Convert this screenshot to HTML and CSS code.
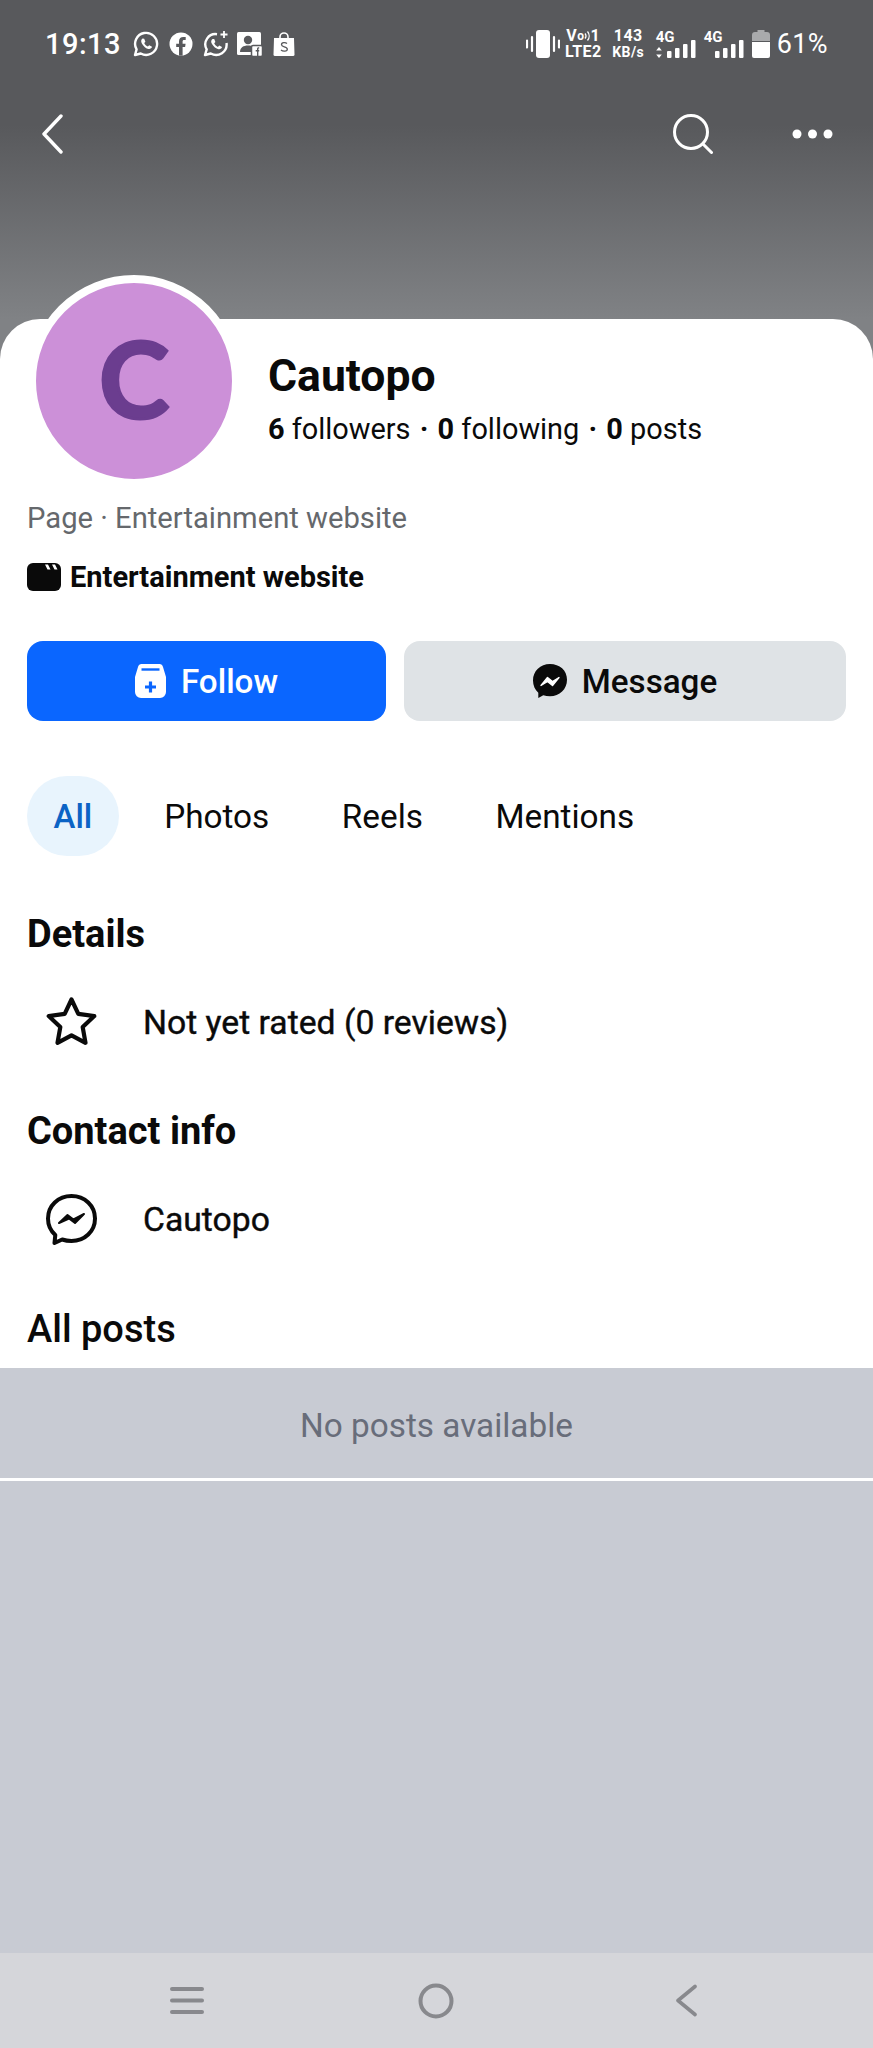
FILE: index.html
```html
<!DOCTYPE html>
<html lang="en">
<head>
    <meta charset="UTF-8">
    <meta name="viewport" content="width=device-width, initial-scale=1.0">
    <title>Cautopo</title>
    <link rel="stylesheet" href="styles.css">
</head>
<body>
    <header class="cover">
        <div class="status-bar">
            <div class="status-left">
                <span class="clock">19:13</span>
                <svg class="st-icon" width="26" height="26" viewBox="0 0 26 26"><path d="M2 24l1.600-5.600A11 11 0 1 1 7.800 22.500z" fill="none" stroke="#fff" stroke-width="2.400" stroke-linejoin="round"/><path d="M9.500 7.500c-1.500 1-1.800 3-.5 5.200 1.500 2.600 4 4.800 6.500 5.300 1.800.3 3.200-.7 3.500-2.200l-2.800-1.500-1.300 1.300c-1.500-.6-3-2-3.700-3.600l1.200-1.300-1.200-3z" fill="#fff"/></svg>
                <svg class="st-icon" width="24" height="24" viewBox="0 0 24 24"><circle cx="12" cy="12" r="11.500" fill="#fff"/><path d="M10 23.500V15H7.200v-3.300H10V9.300c0-2.900 1.700-4.400 4.300-4.400.9 0 1.700.1 2.400.2v2.900h-1.500c-1.300 0-1.600.7-1.600 1.600v2.100h3l-.5 3.300h-2.500v8.500z" fill="#58595c"/></svg>
                <svg class="st-icon" width="26" height="26" viewBox="0 0 26 26"><path d="M14 3.200A10.200 10.200 0 0 0 3.700 18.400L2 24l5.800-1.500A10.500 10.500 0 0 0 23.500 12" fill="none" stroke="#fff" stroke-width="2.400" stroke-linejoin="round"/><path d="M9.500 8c-1.500 1-1.800 3-.5 5 1.500 2.600 4 4.800 6.500 5.300 1.800.3 3.200-.7 3.500-2.200l-2.800-1.500-1.300 1.300c-1.500-.6-3-2-3.700-3.600l1.200-1.300-1.200-3z" fill="#fff"/><path d="M21 0v7M17.500 3.500h7" stroke="#fff" stroke-width="1.800"/></svg>
                <svg class="st-icon st-contact" width="26" height="25" viewBox="0 0 26 25"><rect x="0" y="0" width="24" height="23" rx="1.500" fill="#fff"/><circle cx="11" cy="8" r="4.200" fill="#58595c"/><path d="M3 20c0-4.500 3.500-6.500 8-6.500 2 0 3.500.4 4.800 1V20z" fill="#58595c"/><rect x="14.500" y="13.500" width="11" height="11" rx="1.500" fill="#fff" stroke="#58595c" stroke-width="1.500"/><path d="M20 24v-4.500h-1.300v-1.600H20v-1c0-1.300.8-1.900 2.200-1.700v1.300c-.6 0-.8.100-.8.500v.9h.8v1.600h-.8V24z" fill="#58595c"/></svg>
                <svg class="st-icon" width="22" height="24" viewBox="0 0 22 24"><path d="M1 6h20l.5 16.500a1.500 1.500 0 0 1-1.500 1.500H2a1.500 1.500 0 0 1-1.500-1.500z" fill="#fff"/><path d="M7 6.500V5a4 4 0 0 1 8 0v1.500" fill="none" stroke="#fff" stroke-width="1.600"/><path d="M14 11.500c-1.500-1.200-5.500-1.300-5.500 1.200 0 2.700 5.800 1.500 5.800 4.500 0 2.500-4.500 2.500-6.300.9" fill="none" stroke="#58595c" stroke-width="1.300"/></svg>
            </div>
            <div class="status-right">
                <svg class="st-icon" width="34" height="28" viewBox="0 0 34 28"><rect x="10" y="0" width="14" height="28" rx="3" fill="#fff"/><path d="M1 10.500v7M6 7v14M28 7v14M33 10.500v7" stroke="#fff" stroke-width="2.200" stroke-linecap="round"/></svg>
                <div class="net-text net-volte">
                    <span class="volte-top">V<small>o</small><svg width="6" height="12" viewBox="0 0 6 12"><path d="M1 3.500a4 4 0 0 1 0 5M3.500 1.500a7 7 0 0 1 0 9" fill="none" stroke="#fff" stroke-width="1.300"/></svg>1</span>
                    <span>LTE2</span>
                </div>
                <div class="net-text net-speed"><span>143</span><span class="net-small">KB/s</span></div>
                <div class="sim">
                    <span class="sim-label">4G</span>
                    <svg width="41" height="18" viewBox="0 0 41 18"><path d="M3 7l2.800 3.500H.2zM3 18l2.800-3.500H.2z" fill="#fff"/><rect x="11" y="11" width="4.500" height="7" rx="1" fill="#fff"/><rect x="19" y="8" width="4.500" height="10" rx="1" fill="#fff"/><rect x="27" y="4" width="4.500" height="14" rx="1" fill="#fff"/><rect x="35" y="0" width="4.500" height="18" rx="1" fill="#fff"/></svg>
                </div>
                <div class="sim sim-second">
                    <span class="sim-label">4G</span>
                    <svg width="41" height="18" viewBox="0 0 41 18"><rect x="11" y="11" width="4.500" height="7" rx="1" fill="#fff"/><rect x="19" y="8" width="4.500" height="10" rx="1" fill="#fff"/><rect x="27" y="4" width="4.500" height="14" rx="1" fill="#fff"/><rect x="35" y="0" width="4.500" height="18" rx="1" fill="#fff"/></svg>
                </div>
                <svg class="st-icon" width="18" height="28" viewBox="0 0 18 28"><path d="M0 11V5a3 3 0 0 1 3-3h2.500V0h7v2H15a3 3 0 0 1 3 3v6z" fill="#a9aaac"/><path d="M0 12h18v14a2 2 0 0 1-2 2H2a2 2 0 0 1-2-2z" fill="#fff"/></svg>
                <span class="battery-text">61%</span>
            </div>
        </div>
        <nav class="top-nav">
            <svg width="22" height="40" viewBox="0 0 22 40"><path d="M20 2L3 20l17 18" fill="none" stroke="#fff" stroke-width="3.400" stroke-linecap="round" stroke-linejoin="round"/></svg>
            <div class="top-actions">
                <svg width="40" height="40" viewBox="0 0 40 40"><circle cx="18" cy="18" r="16.500" fill="none" stroke="#fff" stroke-width="3"/><path d="M30 30l8.500 8.500" stroke="#fff" stroke-width="3" stroke-linecap="round"/></svg>
                <svg width="41" height="10" viewBox="0 0 41 10"><circle cx="5" cy="5" r="4.500" fill="#fff"/><circle cx="20.500" cy="5" r="4.500" fill="#fff"/><circle cx="36" cy="5" r="4.500" fill="#fff"/></svg>
            </div>
        </nav>
    </header>

    <main class="sheet">
        <div class="profile">
            <div class="avatar"><span>C</span></div>
            <div class="profile-text">
                <h1 class="name">Cautopo</h1>
                <p class="stats"><b>6</b> followers <i>·</i> <b>0</b> following <i>·</i> <b>0</b> posts</p>
            </div>
        </div>
        <p class="category">Page · Entertainment website</p>
        <div class="category-bold">
            <svg width="34" height="28" viewBox="0 0 34 28"><path d="M6 0h22a6 6 0 0 1 6 6v16a6 6 0 0 1-6 6H6a6 6 0 0 1-6-6V6a6 6 0 0 1 6-6z" fill="#0a0a0a"/><path d="M18 1.500l2.500 5h3l-2.500-5zM25 1.500l2.500 5h3l-2.500-5z" fill="#fff"/></svg>
            <span>Entertainment website</span>
        </div>

        <div class="buttons">
            <button class="btn btn-follow">
                <svg width="31" height="34" viewBox="0 0 31 34"><path d="M7 0h17a4 4 0 0 1 4 3l3 10v15a6 6 0 0 1-6 6H6a6 6 0 0 1-6-6V13l3-10a4 4 0 0 1 4-3z" fill="#fff"/><path d="M6.500 5.500h18" stroke="#0a66ff" stroke-width="2.400"/><path d="M15.500 17.500v11M10 23h11" stroke="#0a66ff" stroke-width="3.200"/></svg>
                Follow
            </button>
            <button class="btn btn-message">
                <svg width="34" height="34" viewBox="0 0 34 34"><path d="M17 0C7.400 0 0 7 0 16.500c0 5 2 9.300 5.300 12.300V34l5-2.700c2.100.6 4.300 1 6.700 1 9.600 0 17-7 17-16.500S26.600 0 17 0z" fill="#0a0a0a"/><path d="M8 21.500l6.500-8 5 4 6.500-4-6.500 8-5-4z" fill="#fff" stroke="#fff" stroke-width="1.400" stroke-linejoin="round"/></svg>
                Message
            </button>
        </div>

        <div class="tabs">
            <a class="tab tab-active">All</a>
            <a class="tab">Photos</a>
            <a class="tab">Reels</a>
            <a class="tab">Mentions</a>
        </div>

        <h2 class="section-title title-details">Details</h2>
        <div class="info-row row-rating">
            <svg width="51" height="51" viewBox="0 0 51 51"><path d="M25.500 2.500l6.800 14.300 16 2.300-11.600 11 2.800 15.700-14-7.500-14 7.500 2.800-15.700-11.600-11 16-2.300z" fill="none" stroke="#0a0a0a" stroke-width="4.200" stroke-linejoin="round"/></svg>
            <span>Not yet rated (0 reviews)</span>
        </div>

        <h2 class="section-title title-contact">Contact info</h2>
        <div class="info-row row-contact">
            <svg width="51" height="51" viewBox="0 0 51 51"><path d="M25.500 2C12.200 2 2 11.700 2 24.500c0 6.700 2.800 12.500 7.300 16.500l-.8 8 7.700-3.500c2.900 1 6 1.500 9.300 1.500 13.300 0 23.500-9.700 23.500-22.500S38.800 2 25.500 2z" fill="none" stroke="#0a0a0a" stroke-width="4" stroke-linejoin="round"/><path d="M13 29l8.500-8 6 4.500L38 20l-9 9-6-4.500z" fill="#0a0a0a" stroke="#0a0a0a" stroke-width="2" stroke-linejoin="round"/></svg>
            <span>Cautopo</span>
        </div>

        <h2 class="section-title title-posts">All posts</h2>
    </main>

    <section class="posts">
        <div class="no-posts">No posts available</div>
        <div class="posts-fill"></div>
    </section>

    <footer class="nav-bar">
        <svg width="34" height="29" viewBox="0 0 34 29"><path d="M2 3h30M2 14.500h30M2 26h30" stroke="#88898d" stroke-width="4" stroke-linecap="round"/></svg>
        <svg width="36" height="36" viewBox="0 0 36 36"><circle cx="18" cy="18" r="15.500" fill="none" stroke="#88898d" stroke-width="4"/></svg>
        <svg width="24" height="33" viewBox="0 0 24 33"><path d="M21 2.500L4 16.500l17 14" fill="none" stroke="#88898d" stroke-width="3.600" stroke-linecap="round" stroke-linejoin="round"/></svg>
    </footer>
</body>
</html>
```

FILE: styles.css
```css
* {
    box-sizing: border-box;
}

body {
    font-family: Roboto, 'Liberation Sans', sans-serif;
    margin: 0;
    height: 2048px;
    display: flex;
    flex-direction: column;
    color: #0a0a0a;
    background: #fff;
}

/* top area */
.cover {
    height: 359px;
    padding-top: 30px;
    background: linear-gradient(#58595c 0, #58595c 125px, #808285 319px);
    color: #fff;
}

.status-bar {
    height: 28px;
    padding: 0 45px;
    display: flex;
    justify-content: space-between;
    align-items: center;
}

.status-left,
.status-right {
    display: flex;
    align-items: center;
}

.status-left {
    gap: 10px;
}

.status-right {
    gap: 7px;
}

.st-icon {
    display: block;
}

.st-contact {
    margin-left: -2px;
}

.clock {
    font-size: 29px;
    font-weight: 500;
    letter-spacing: 0.5px;
    margin-right: 2px;
}

.net-text {
    display: flex;
    flex-direction: column;
    align-items: center;
    font-size: 16px;
    font-weight: 700;
    line-height: 16px;
    width: 33px;
    letter-spacing: 0.4px;
}

.volte-top {
    display: flex;
    align-items: center;
}

.volte-top small {
    font-size: 12px;
}

.net-speed {
    margin-left: 6px;
    width: 31px;
}

.net-small {
    font-size: 14px;
}

.sim {
    width: 41px;
    height: 28px;
    position: relative;
    margin-left: 5px;
}

.sim-second {
    margin-left: 0;
}

.sim svg {
    position: absolute;
    left: 0;
    bottom: 0;
}

.sim-label {
    position: absolute;
    left: 0;
    top: 0;
    font-size: 15px;
    font-weight: 700;
    line-height: 14px;
}

.battery-text {
    font-size: 27px;
    line-height: 28px;
    letter-spacing: 0.4px;
}

.top-nav {
    margin-top: 56px;
    padding: 0 40px 0 41px;
    display: flex;
    justify-content: space-between;
    align-items: center;
}

.top-actions {
    display: flex;
    align-items: center;
    gap: 79px;
}

/* white sheet */
.sheet {
    position: relative;
    margin-top: -40px;
    padding: 0 27px 17px;
    background: #fff;
    border-radius: 40px 40px 0 0;
}

.profile {
    display: flex;
    align-items: flex-start;
    gap: 28px;
}

.avatar {
    width: 212px;
    height: 212px;
    margin: -44px 0 0 1px;
    padding-bottom: 8px;
    border: 8px solid #fff;
    border-radius: 50%;
    background: #cc90d8;
    color: #6b3d8f;
    font-family: Lato, sans-serif;
    font-size: 106px;
    font-weight: 700;
    -webkit-text-stroke: 3px #6b3d8f;
    display: flex;
    align-items: center;
    justify-content: center;
}

.profile-text {
    margin-top: 33px;
}

.name {
    margin: 0;
    font-size: 44.500px;
    font-weight: 700;
    line-height: 48px;
}

.stats {
    margin: 11px 0 0;
    font-size: 28.900px;
    line-height: 36px;
}

.stats i {
    font-style: normal;
    font-weight: 700;
    margin: 0 2px;
}

.category {
    margin: 13px 0 0;
    font-size: 29.200px;
    line-height: 36px;
    color: #65686c;
}

.category-bold {
    margin-top: 23px;
    height: 36px;
    display: flex;
    align-items: center;
    gap: 9px;
    font-size: 29px;
    font-weight: 700;
    line-height: 36px;
}

.buttons {
    margin-top: 46px;
    display: grid;
    grid-template-columns: 359px 1fr;
    gap: 18px;
}

.btn {
    height: 80px;
    border: 0;
    border-radius: 16px;
    font-family: inherit;
    font-size: 33.200px;
    font-weight: 500;
    display: flex;
    align-items: center;
    justify-content: center;
    gap: 15px;
}

.btn-follow {
    background: #0a66ff;
    color: #fff;
}

.btn-message {
    background: #dfe3e6;
    color: #0a0a0a;
}

.tabs {
    margin-top: 55px;
    display: flex;
    gap: 18.500px;
}

.tab {
    height: 80px;
    padding: 0 27px;
    border-radius: 40px;
    font-size: 33.300px;
    display: flex;
    align-items: center;
}

.tab-active {
    padding: 0 26.500px;
    background: #e8f4fd;
    color: #0b63c5;
    font-size: 33px;
    font-weight: 500;
}

.section-title {
    margin: 0;
    font-size: 38px;
    font-weight: 700;
    line-height: 44px;
}

.title-details {
    margin-top: 56px;
}

.title-contact {
    margin-top: 61px;
}

.title-posts {
    margin-top: 62px;
    font-weight: 500;
}

.info-row {
    display: flex;
    align-items: center;
    gap: 46px;
    padding-left: 19px;
    height: 51px;
    font-size: 33.700px;
    -webkit-text-stroke: 0.4px #0a0a0a;
}

.row-rating {
    margin-top: 41px;
}

.row-contact {
    margin-top: 41px;
}

/* posts area */
.posts {
    flex: 1;
    display: flex;
    flex-direction: column;
    background: #c8cbd3;
}

.no-posts {
    height: 113px;
    padding-top: 5px;
    border-bottom: 3px solid #fff;
    color: #686d7a;
    font-size: 33.300px;
    display: flex;
    align-items: center;
    justify-content: center;
}

.posts-fill {
    flex: 1;
}

.nav-bar {
    height: 95px;
    padding: 0 62px;
    background: #d5d6da;
    display: grid;
    grid-template-columns: 1fr 1fr 1fr;
    align-items: center;
    justify-items: center;
}
```
